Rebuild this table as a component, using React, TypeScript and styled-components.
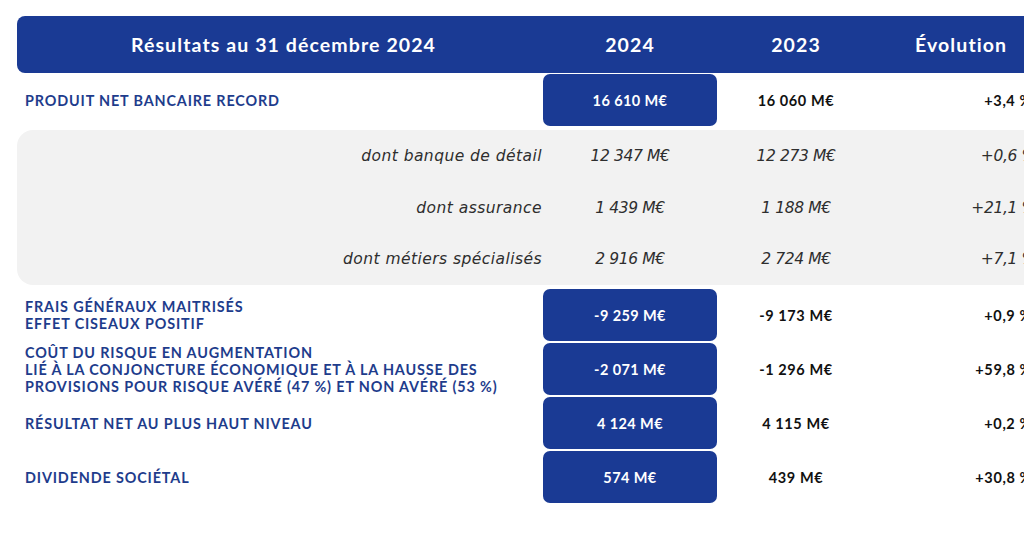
import React from "react";
import styled, { createGlobalStyle } from "styled-components";

const Global = createGlobalStyle`
  html, body { margin: 0; padding: 0; background: #ffffff; overflow: hidden; }
  body { font-family: Lato, "Noto Sans", sans-serif; width: 1024px; height: 538px; }
`;

const BLUE = "#1a3a94";
const COLS = "525px 176px 156px 165px";

const Page = styled.div`
  padding: 16px 0 0 17px;
  width: 1040px;
`;

const Header = styled.div`
  display: grid;
  grid-template-columns: ${COLS};
  height: 57px;
  align-items: center;
  background: ${BLUE};
  border-radius: 8px;
  color: #fff;
  font-weight: 700;
  font-size: 19.5px;
  letter-spacing: 1.1px;
`;

const HeadCell = styled.div<{ $pad?: number; $left?: boolean }>`
  text-align: ${(p) => (p.$left ? "left" : "center")};
  padding-left: ${(p) => p.$pad ?? 0}px;
`;

const Row = styled.div<{ $h?: number }>`
  display: grid;
  grid-template-columns: ${COLS};
  height: ${(p) => p.$h ?? 54}px;
  align-items: center;
`;

const Label = styled.div`
  padding-left: 8px;
  color: #1e3c8c;
  font-weight: 700;
  font-size: 14.4px;
  letter-spacing: 0.85px;
  line-height: 17px;
  text-transform: uppercase;
`;

const Box = styled.div`
  height: 52px;
  margin: 0 1px;
  border-radius: 7px;
  background: ${BLUE};
  color: #fff;
  font-weight: 700;
  font-size: 14.5px;
  letter-spacing: 0.4px;
  display: flex;
  align-items: center;
  justify-content: center;
`;

const Value = styled.div<{ $right?: boolean }>`
  color: #111;
  font-weight: 700;
  font-size: 14.5px;
  letter-spacing: 0.6px;
  text-align: ${(p) => (p.$right ? "right" : "center")};
  padding-right: ${(p) => (p.$right ? 7 : 0)}px;
`;

const Panel = styled.div`
  margin: 3px 0 3px;
  background: #f2f2f2;
  border-radius: 16px;
`;

const Italic = styled.div`
  font-family: "DejaVu Sans", sans-serif;
  color: #2e2e2e;
  font-style: italic;
  font-size: 15.5px;
`;

const SubLabel = styled(Italic)`
  text-align: right;
  letter-spacing: 0.45px;
`;

const SubValue = styled(Italic)<{ $right?: boolean }>`
  letter-spacing: -0.35px;
  text-align: ${(p) => (p.$right ? "right" : "center")};
  padding-right: ${(p) => (p.$right ? 3 : 0)}px;
`;

type Main = { label: React.ReactNode; v24: string; v23: string; evo: string };

const mains: Main[] = [
  { label: <>Frais généraux maitrisés<br />effet ciseaux positif</>, v24: "-9 259 M€", v23: "-9 173 M€", evo: "+0,9 %" },
  {
    label: <>Coût du risque en augmentation<br />lié à la conjoncture économique et à la hausse des<br />provisions pour risque avéré (47 %) et non avéré (53 %)</>,
    v24: "-2 071 M€", v23: "-1 296 M€", evo: "+59,8 %",
  },
  { label: <>Résultat net au plus haut niveau</>, v24: "4 124 M€", v23: "4 115 M€", evo: "+0,2 %" },
  { label: <>Dividende sociétal</>, v24: "574 M€", v23: "439 M€", evo: "+30,8 %" },
];

const subs = [
  { label: "dont banque de détail", v24: "12 347 M€", v23: "12 273 M€", evo: "+0,6 %" },
  { label: "dont assurance", v24: "1 439 M€", v23: "1 188 M€", evo: "+21,1 %" },
  { label: "dont métiers spécialisés", v24: "2 916 M€", v23: "2 724 M€", evo: "+7,1 %" },
];

export default function App() {
  return (
    <>
      <Global />
      <Page>
        <Header>
          <HeadCell $pad={8}>Résultats au 31 décembre 2024</HeadCell>
          <HeadCell>2024</HeadCell>
          <HeadCell>2023</HeadCell>
          <HeadCell $left $pad={41}>Évolution</HeadCell>
        </Header>
        <Row>
          <Label>Produit net bancaire record</Label>
          <Box>16 610 M€</Box>
          <Value>16 060 M€</Value>
          <Value $right>+3,4 %</Value>
        </Row>
        <Panel>
          {subs.map((s) => (
            <Row key={s.label} $h={51.7}>
              <SubLabel>{s.label}</SubLabel>
              <SubValue>{s.v24}</SubValue>
              <SubValue>{s.v23}</SubValue>
              <SubValue $right>{s.evo}</SubValue>
            </Row>
          ))}
        </Panel>
        {mains.map((m) => (
          <Row key={m.v24}>
            <Label>{m.label}</Label>
            <Box>{m.v24}</Box>
            <Value>{m.v23}</Value>
            <Value $right>{m.evo}</Value>
          </Row>
        ))}
      </Page>
    </>
  );
}
